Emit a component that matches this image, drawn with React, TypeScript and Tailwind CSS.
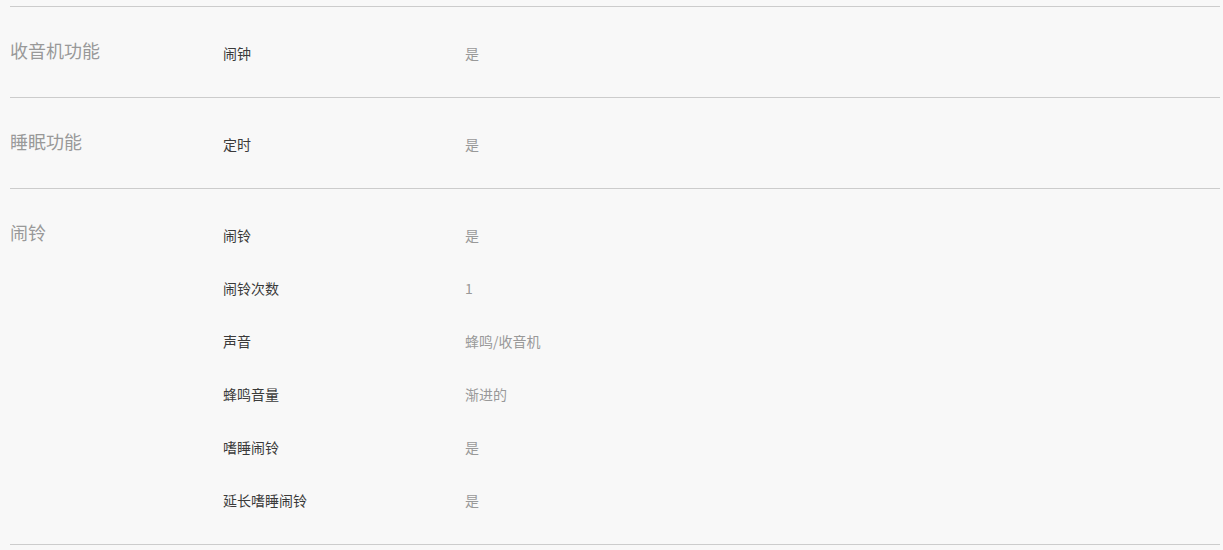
const sections = [
  { title: '收音机功能', rows: [['闹钟', '是']] },
  { title: '睡眠功能', rows: [['定时', '是']] },
  {
    title: '闹铃',
    rows: [
      ['闹铃', '是'],
      ['闹铃次数', '1'],
      ['声音', '蜂鸣/收音机'],
      ['蜂鸣音量', '渐进的'],
      ['嗜睡闹铃', '是'],
      ['延长嗜睡闹铃', '是'],
    ],
  },
];

export default function App() {
  return (
    <div
      className="min-h-[550px] bg-[#f8f8f8] pt-[6px] pl-[10px] pr-[3px]"
      style={{ fontFamily: '"Noto Sans CJK SC", "Noto Sans", sans-serif' }}
    >
      {sections.map((s, i) => (
        <div
          key={s.title}
          className={`flex border-t border-[#cccccc] ${i === sections.length - 1 ? 'border-b' : ''}`}
        >
          {/* Section title */}
          <div className="w-[213px] shrink-0 pt-[30px] text-[18px] leading-[26px] text-[#999999]">
            {s.title}
          </div>

          {/* Spec rows */}
          <div className="flex-1 pt-[20px] pb-[17px]">
            {s.rows.map(([label, value]) => (
              <div key={label} className="flex h-[53px] items-center text-[14px]">
                <span className="w-[242px] shrink-0 text-[#3a3a3a]">{label}</span>
                <span className="text-[#999999]">{value}</span>
              </div>
            ))}
          </div>
        </div>
      ))}
    </div>
  );
}
